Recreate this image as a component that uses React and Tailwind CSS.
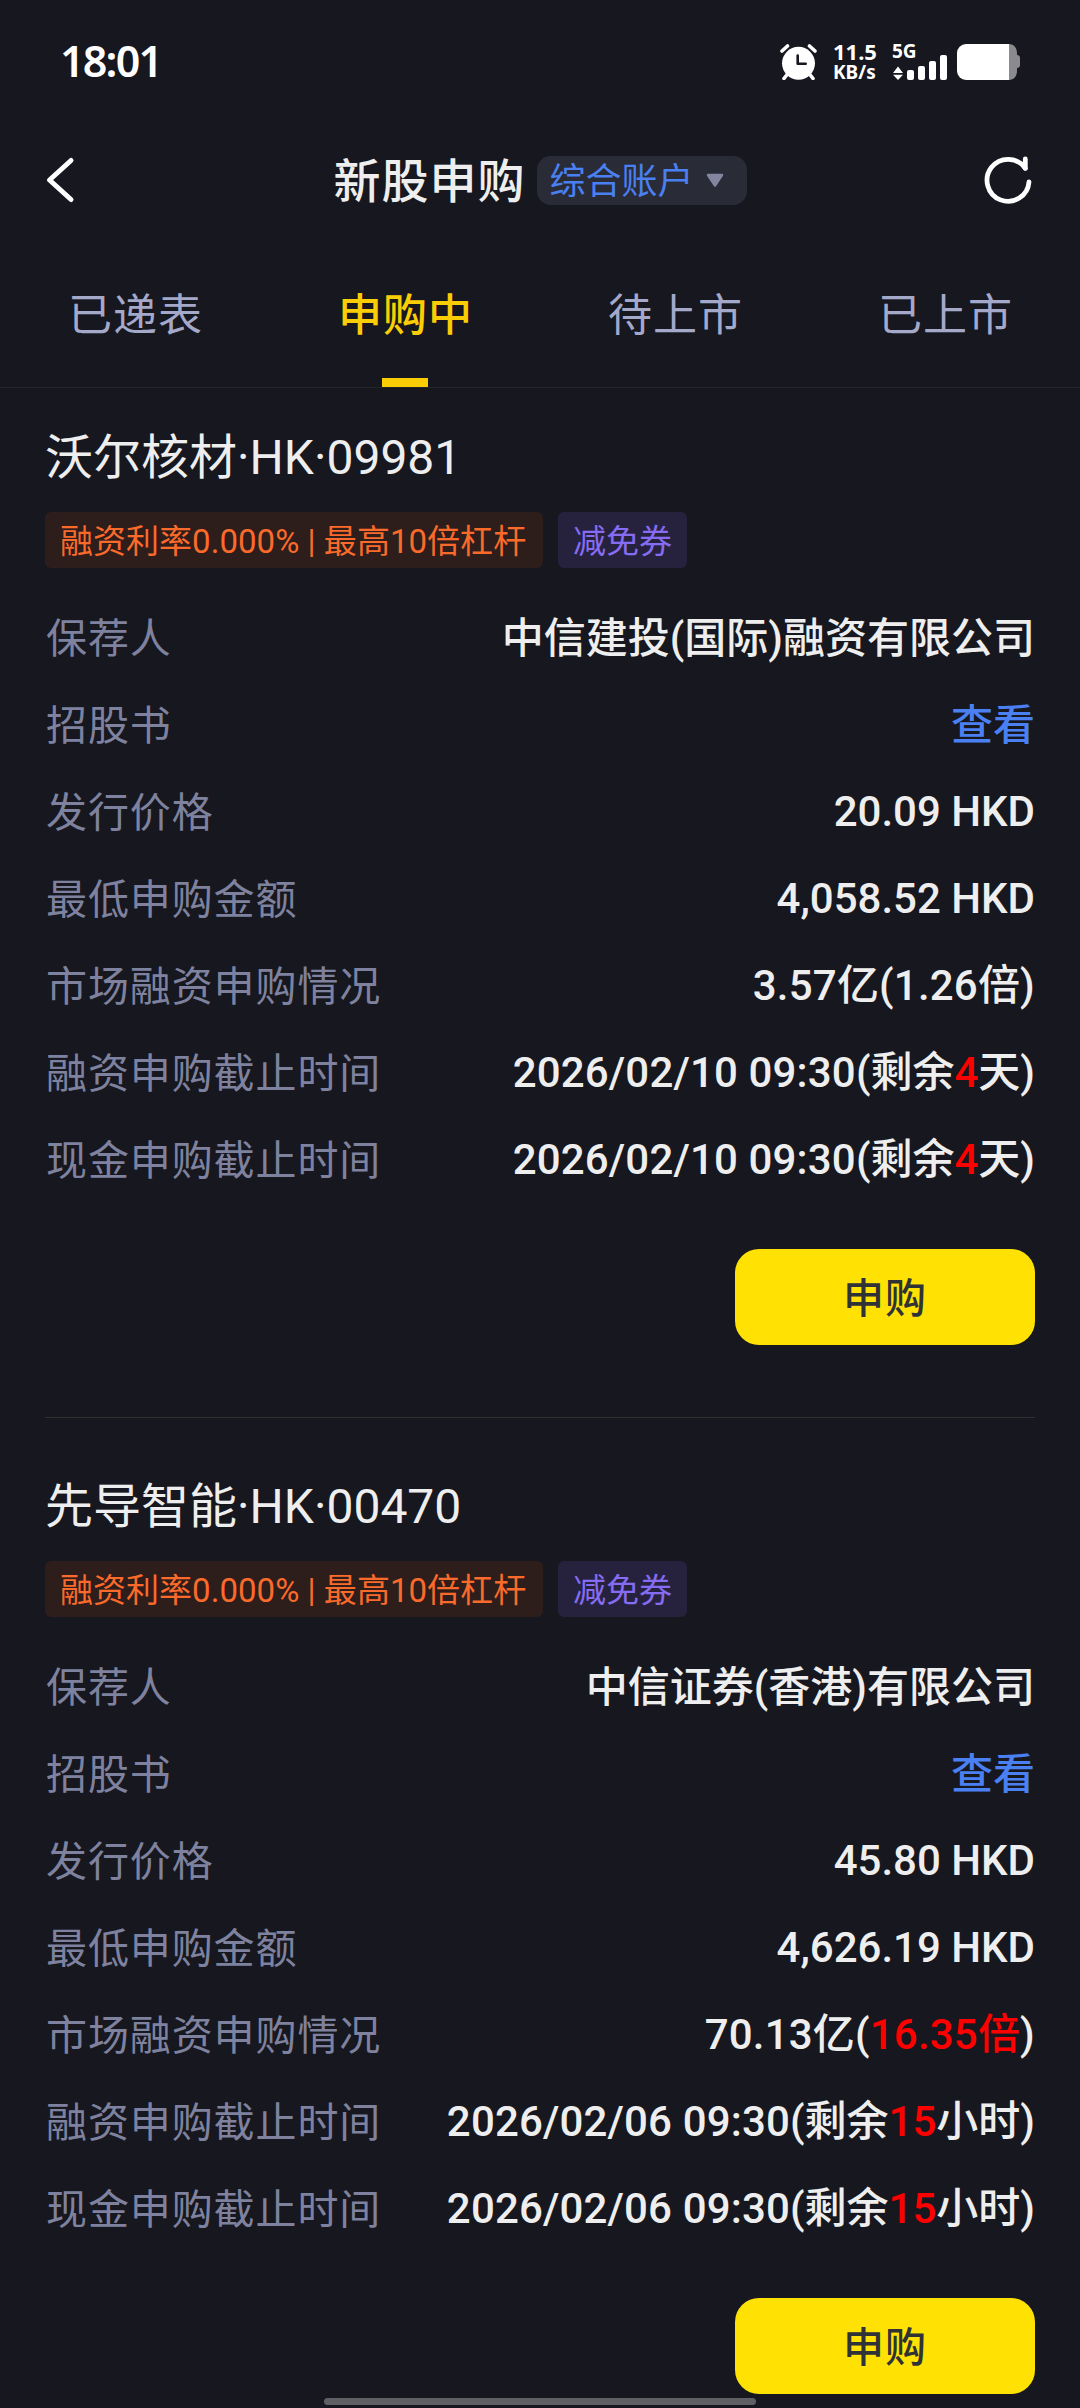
const tabs = ['已递表', '申购中', '待上市', '已上市']

const stocks = [
    {
        name: '沃尔核材·HK·09981',
        rate: '融资利率0.000% | 最高10倍杠杆',
        sponsor: '中信建投(国际)融资有限公司',
        price: '20.09 HKD',
        min: '4,058.52 HKD',
        market: <>3.57亿(1.26倍)</>,
        date: '2026/02/10 09:30',
        left: '4',
        unit: '天',
    },
    {
        name: '先导智能·HK·00470',
        rate: '融资利率0.000% | 最高10倍杠杆',
        sponsor: '中信证券(香港)有限公司',
        price: '45.80 HKD',
        min: '4,626.19 HKD',
        market: <>70.13亿(<span className="text-[#fe0000]">16.35倍</span>)</>,
        date: '2026/02/06 09:30',
        left: '15',
        unit: '小时',
    },
]

function StatusBar() {
    return (
        <div className="h-[120px] flex justify-between items-start px-[60px] pt-[44px] text-white">
            <div className="font-['Noto_Sans'] font-semibold text-[43px] leading-[34px] tracking-[-1.8px]">18:01</div>
            <div className="flex h-[36px]">
                <svg width="37" height="36" viewBox="0 0 37 36" fill="none">
                    <circle cx="18.5" cy="19.3" r="16.5" fill="#fff" />
                    <path d="M2 7l5.5-5M35 7l-5.5-5" stroke="#fff" strokeWidth="3.6" strokeLinecap="round" />
                    <path d="M7.5 30L4 34.5M29.5 30L33 34.5" stroke="#fff" strokeWidth="3.6" strokeLinecap="round" />
                    <path d="M17.7 11.5v8.3h8" stroke="#16171f" strokeWidth="2.6" strokeLinecap="round" strokeLinejoin="round" />
                </svg>
                <div className="ml-[16px] w-[45px] font-['Noto_Sans'] font-bold whitespace-nowrap">
                    <div className="text-[22px] leading-[15px]">11.5</div>
                    <div className="text-[19px] leading-[16px] mt-[5px]">KB/s</div>
                </div>
                <div className="ml-[14px] w-[56px]">
                    <div className="font-['Noto_Sans'] font-bold text-[19px] leading-[15px]">5G</div>
                    <svg className="mt-[-4px]" width="56" height="25" viewBox="0 0 56 25" fill="#fff">
                        <path d="M1 18l5-6.5 5 6.5zM1 19.8h10l-5 5.2z" />
                        <rect x="15" y="15" width="7" height="10" rx="2" />
                        <rect x="26" y="11" width="7" height="14" rx="2" />
                        <rect x="37" y="6" width="7" height="19" rx="2" />
                        <rect x="48" y="0" width="7" height="25" rx="2" />
                    </svg>
                </div>
                <svg className="ml-[9px]" width="63" height="36" viewBox="0 0 63 36">
                    <path d="M52 0c5 0 8 4 8 9v2c2 0 3 1 3 3v7c0 2-1 3-3 3v3c0 5-3 9-8 9z" fill="#8b8a8f" />
                    <path d="M9 0h43v36H9a9 9 0 0 1-9-9V9a9 9 0 0 1 9-9z" fill="#fff" />
                </svg>
            </div>
        </div>
    )
}

function Header() {
    return (
        <div className="h-[120px] flex justify-between items-center pl-[45px] pr-[47px]">
            <svg width="30" height="48" viewBox="0 0 30 48" fill="none">
                <path d="M26 4.5L4.5 24 26 43.5" stroke="#fff" strokeWidth="5" strokeLinecap="round" strokeLinejoin="round" />
            </svg>
            <div className="flex items-center ml-[21px]">
                <h1 className="pt-[4px] pl-[1px] font-medium text-[47px] leading-[60px] tracking-[1px] text-[#eeeeee]">新股申购</h1>
                <button className="ml-[11px] h-[49px] w-[210px] flex items-center pl-[13px] rounded-[14px] bg-[#292b36] text-[36px] leading-[48px] text-[#4a80f2]">
                    <span className="pt-[4px]">综合账户</span>
                    <svg className="ml-[12px]" width="18" height="15" viewBox="0 0 18 15">
                        <path d="M2 2h14L9 12.5z" fill="#8486a0" stroke="#8486a0" strokeWidth="2.5" strokeLinejoin="round" />
                    </svg>
                </button>
            </div>
            <svg width="50" height="50" viewBox="0 0 50 50" fill="none" stroke="#fff" strokeWidth="4.8" strokeLinecap="round">
                <path d="M42.3 13.3A21 21 0 1 0 46 26.8" />
                <path d="M42.3 4v9.3" />
            </svg>
        </div>
    )
}

function Tabs() {
    return (
        <div className="h-[148px] grid grid-cols-4 border-b border-[#242529]">
            {tabs.map((tab, i) => (
                <div key={tab} className="flex flex-col items-center justify-between pt-[46px]">
                    <span className={i === 1 ? 'pl-[1px] text-[44px] leading-[60px] tracking-[1px] font-medium text-[#facd05]' : 'pl-[1px] text-[44px] leading-[60px] tracking-[1px] text-[#a4a9ca]'}>{tab}</span>
                    {i === 1 && <div className="w-[46px] h-[9px] bg-[#facd05]"></div>}
                </div>
            ))}
        </div>
    )
}

function Row({ label, children }) {
    return (
        <div className="h-[87px] flex justify-between items-center">
            <span className="pt-[5px] pl-[1px] text-[41px] tracking-[0.9px] text-[#7f829e]">{label}</span>
            <span className="text-[42px] font-medium text-[#eeeeee]">{children}</span>
        </div>
    )
}

function Stock({ stock, first }) {
    const deadline = <><span className="tracking-[0.15px]">{stock.date}</span>(剩余<span className="text-[#fe0000]">{stock.left}</span>{stock.unit})</>

    return (
        <div className={first ? 'mx-[45px] pt-[39px] pb-[72px] border-b border-[#2f3032]' : 'mx-[45px] pt-[58px] pb-[72px] border-b border-[#2f3032]'}>
            <h2 className="text-[48px] leading-[62px] text-[#eeeeee]">{stock.name}</h2>
            <div className="flex gap-[15px] mt-[23px] mb-[26px] text-[33px] leading-[56px]">
                <span className="w-[498px] h-[56px] pt-[2px] pl-[15px] rounded-[6px] bg-[#2d1d1b] text-[#fa6a2b] tracking-[0.03px] whitespace-nowrap">{stock.rate}</span>
                <span className="w-[129px] h-[56px] pt-[2px] pl-[15px] rounded-[6px] bg-[#26223d] text-[#866cf2] whitespace-nowrap">减免券</span>
            </div>
            <Row label="保荐人"><span className="inline-block pt-[2px]">{stock.sponsor}</span></Row>
            <Row label="招股书"><span className="inline-block pt-[2px] text-[#4a80f2]">查看</span></Row>
            <Row label="发行价格">{stock.price}</Row>
            <Row label="最低申购金额">{stock.min}</Row>
            <Row label="市场融资申购情况"><span className="tracking-[0.2px]">{stock.market}</span></Row>
            <Row label="融资申购截止时间">{deadline}</Row>
            <Row label="现金申购截止时间">{deadline}</Row>
            <div className="flex justify-end mt-[46px]">
                <button className="w-[300px] h-[96px] pt-[6px] rounded-[24px] bg-[#ffe203] font-medium text-[41px] tracking-[1px] text-[#303336]">申购</button>
            </div>
        </div>
    )
}

export default function App() {
    return (
        <div className="relative w-[1080px] h-[2408px] overflow-hidden bg-[#16171f] font-[Roboto,'Noto_Sans_CJK_SC',sans-serif]">
            <StatusBar />
            <Header />
            <Tabs />
            {stocks.map((stock, i) => <Stock key={stock.name} stock={stock} first={i === 0} />)}
            <div className="absolute left-[324px] top-[2398px] w-[432px] h-[7px] rounded-full bg-[#5f6064]"></div>
        </div>
    )
}
